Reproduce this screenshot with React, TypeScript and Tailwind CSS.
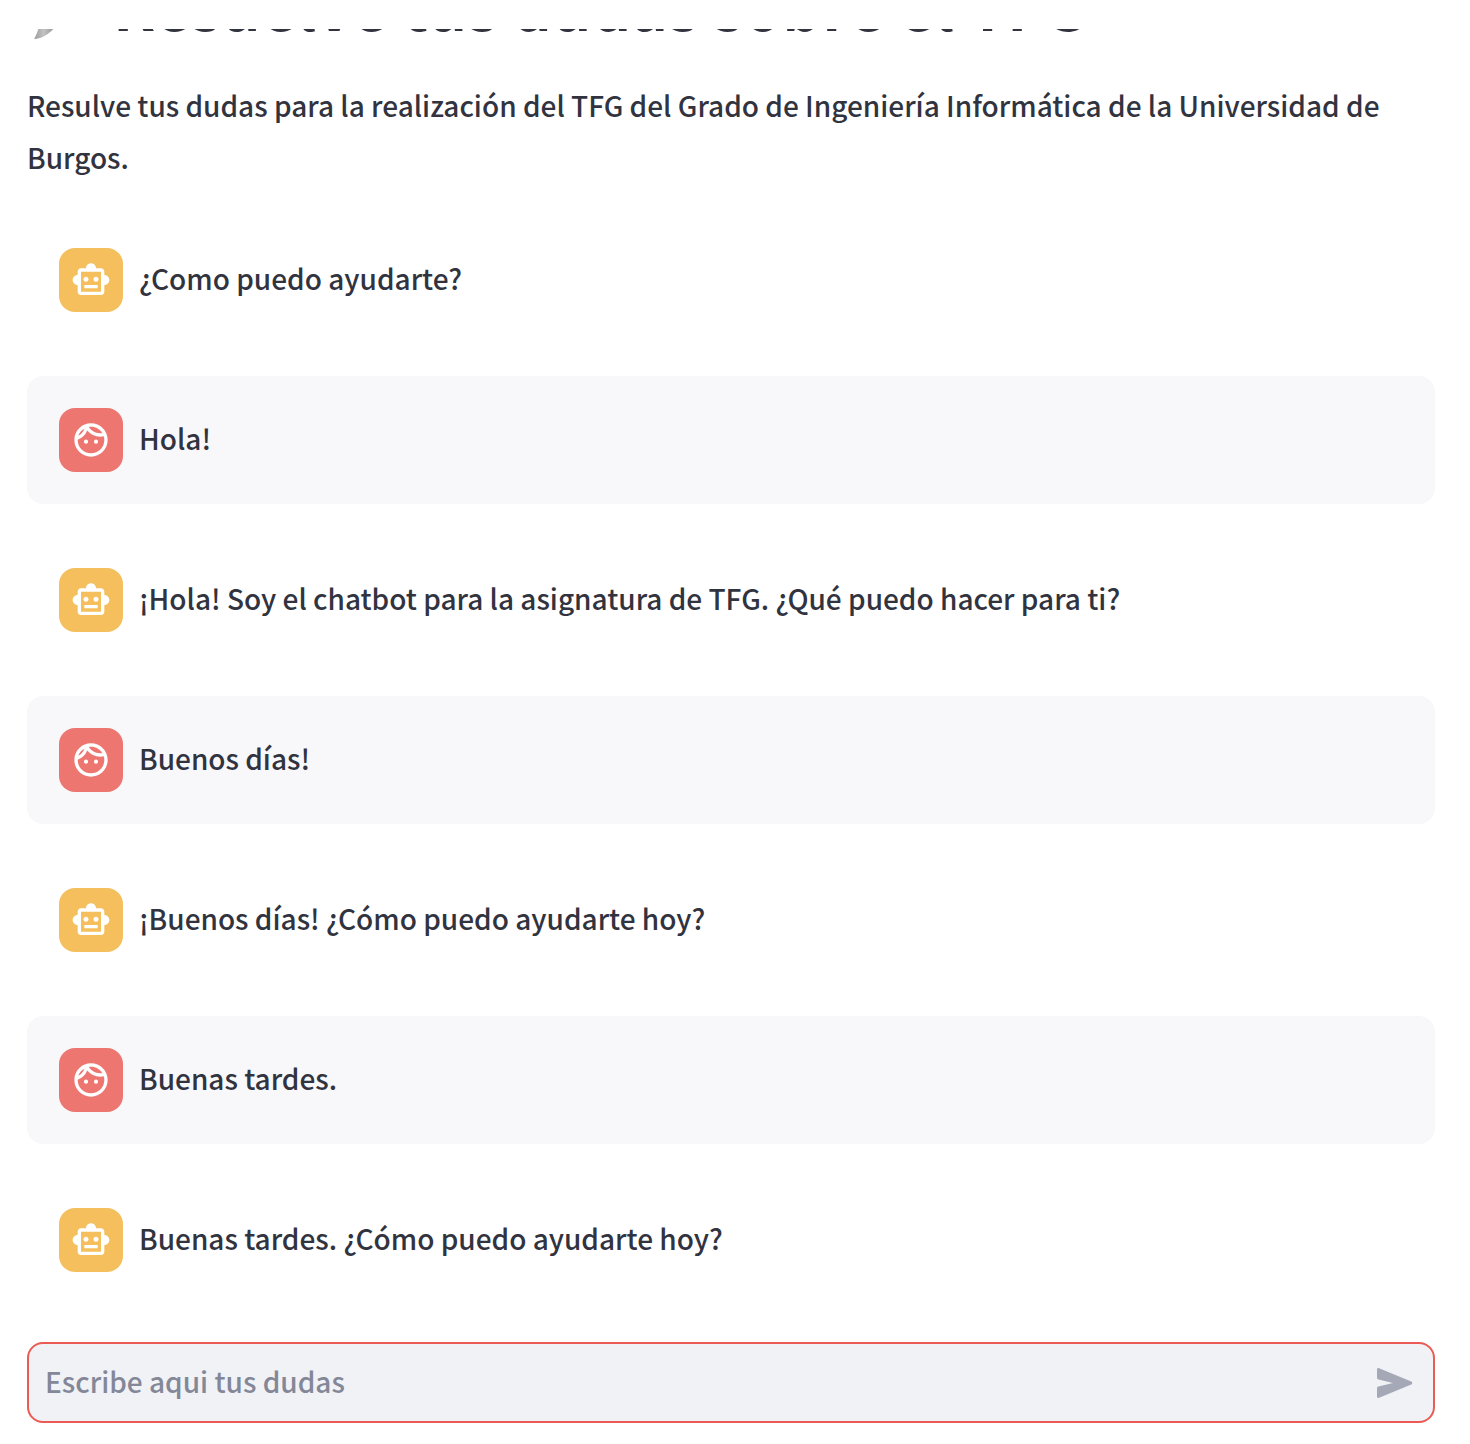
import React from "react";
import { MdOutlineFace, MdOutlineSmartToy } from "react-icons/md";

type Message = { role: "assistant" | "user"; text: string };

const messages: Message[] = [
  { role: "assistant", text: "¿Como puedo ayudarte?" },
  { role: "user", text: "Hola!" },
  {
    role: "assistant",
    text: "¡Hola! Soy el chatbot para la asignatura de TFG. ¿Qué puedo hacer para ti?",
  },
  { role: "user", text: "Buenos días!" },
  { role: "assistant", text: "¡Buenos días! ¿Cómo puedo ayudarte hoy?" },
  { role: "user", text: "Buenas tardes." },
  { role: "assistant", text: "Buenas tardes. ¿Cómo puedo ayudarte hoy?" },
];

function PenIcon() {
  return (
    <svg viewBox="0 0 86 86" className="size-[86px] shrink-0" aria-hidden="true">
      <defs>
        <linearGradient id="nib" x1="0" y1="0" x2="1" y2="0">
          <stop offset="0" stopColor="#9a9a9a" />
          <stop offset="0.4" stopColor="#c2c2c2" />
          <stop offset="1" stopColor="#858585" />
        </linearGradient>
      </defs>
      <path d="M7 78 C9 75 11 70 13 62 L31 62 C25 71 16 78 7 78Z" fill="url(#nib)" />
    </svg>
  );
}

function SendIcon() {
  return (
    <svg viewBox="0 0 36 30" className="h-[30px] w-9" fill="currentColor" aria-hidden="true">
      <path d="M0 1.6C0 .4 1 -.2 2.1 .2L34.3 13.6C35.6 14.2 35.6 15.8 34.3 16.4L2.1 29.8C1 30.2 0 29.6 0 28.4V20.3C0 19.4 .6 18.8 1.4 18.6L16 15L1.4 11.4C.6 11.2 0 10.6 0 9.7Z" />
    </svg>
  );
}

function ChatMessage({ role, text }: Message) {
  const isUser = role === "user";
  return (
    <li className={`flex items-center gap-4 rounded-2xl p-8 ${isUser ? "bg-[#f8f8fb]" : ""}`}>
      <span
        className={`flex size-16 shrink-0 items-center justify-center rounded-2xl text-white ${
          isUser ? "bg-[#ed7671]" : "bg-[#f5bf5d]"
        }`}
      >
        {isUser ? <MdOutlineFace className="size-10" /> : <MdOutlineSmartToy className="size-10" />}
      </span>
      <p className="pb-1 leading-[52px]">{text}</p>
    </li>
  );
}

export default function App() {
  return (
    <main className="bg-white pt-[29px] pr-[35px] pb-[21px] pl-[27px] font-['Noto_Sans_CJK_SC',sans-serif] text-[28px] font-medium text-[#31333f]">
      <header className="flex h-[50px] flex-col justify-end overflow-hidden">
        <h1 className="mb-8 flex shrink-0 items-center text-[62px] leading-[86px] font-bold whitespace-nowrap">
          <PenIcon />
          Resuelve tus dudas sobre el TFG
        </h1>
      </header>
      <p className="leading-[52px]">
        Resulve tus dudas para la realización del TFG del Grado de Ingeniería Informática de la
        Universidad de Burgos.
      </p>
      <ul className="mt-[33px] flex flex-col gap-8">
        {messages.map((message) => (
          <ChatMessage key={message.text} {...message} />
        ))}
      </ul>
      <form
        className="mt-[38px] flex h-[81px] items-center rounded-2xl border-2 border-[#eb5a54] bg-[#f0f2f6] pr-5 pl-4"
        onSubmit={(event) => event.preventDefault()}
      >
        <input
          type="text"
          aria-label="Escribe aqui tus dudas"
          placeholder="Escribe aqui tus dudas"
          className="h-full min-w-0 flex-1 bg-transparent pb-1 outline-none placeholder:text-[#838797]"
        />
        <button type="submit" aria-label="Enviar" className="text-[#a5a8b6]">
          <SendIcon />
        </button>
      </form>
    </main>
  );
}
